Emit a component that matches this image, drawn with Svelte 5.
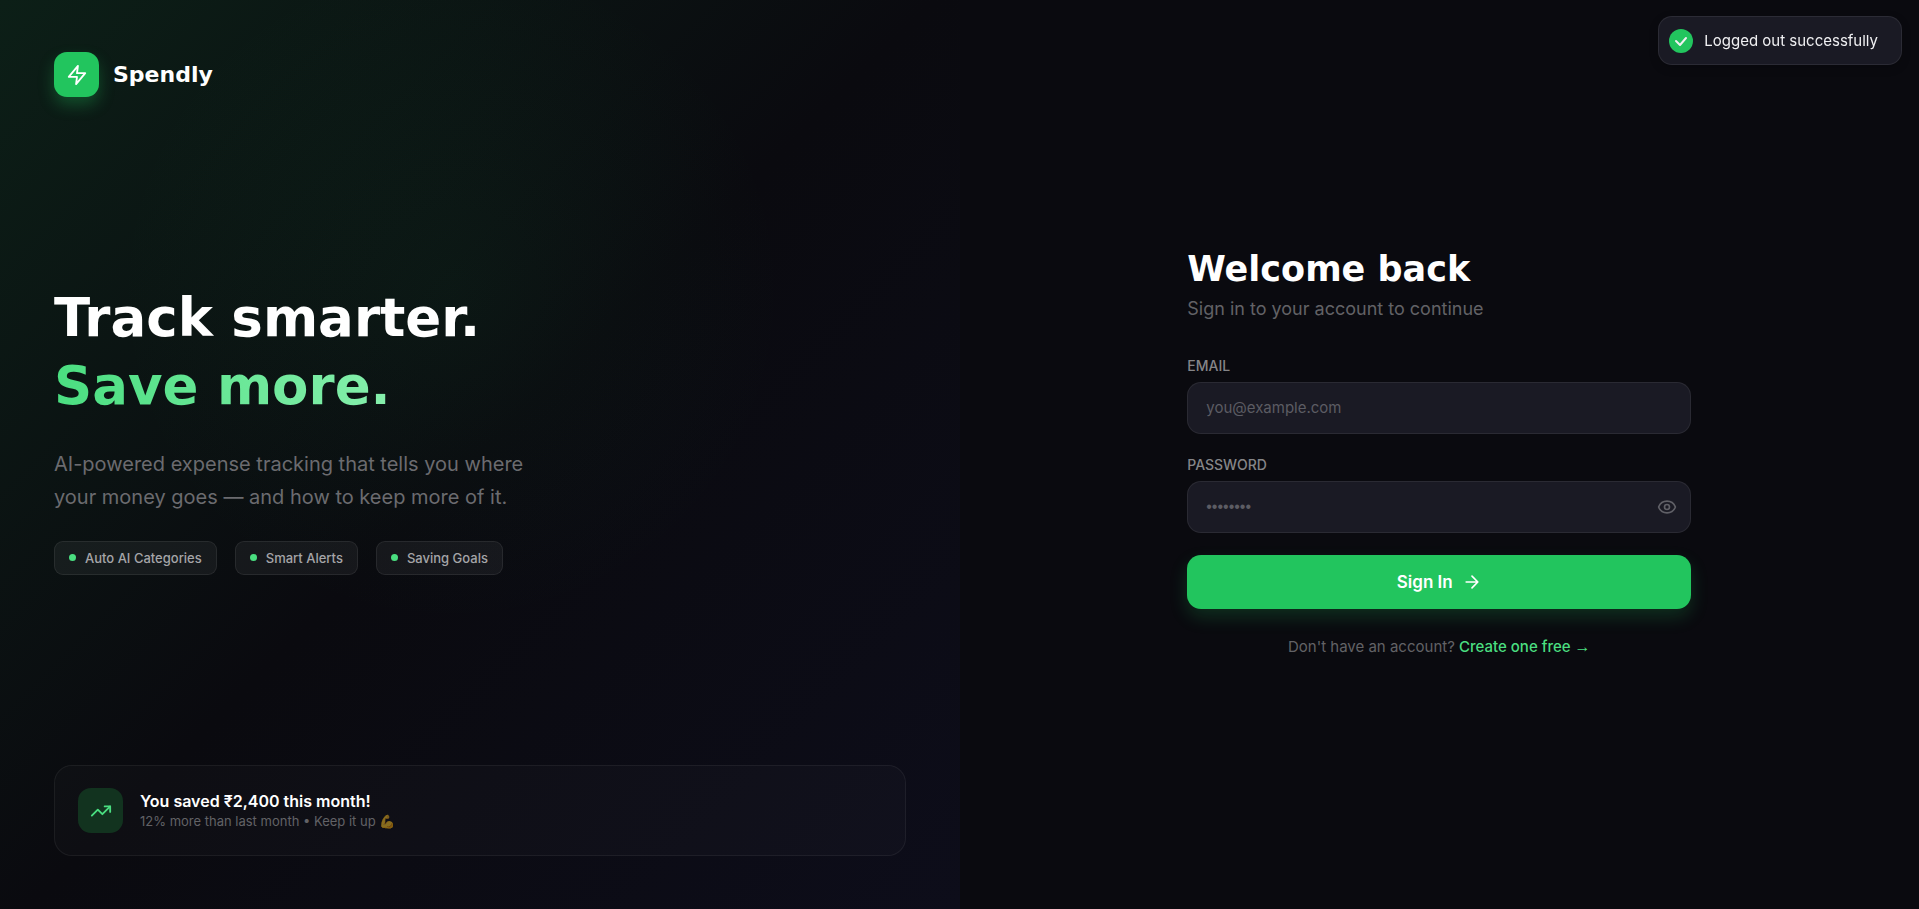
<script>
  const features = ["Auto AI Categories", "Smart Alerts", "Saving Goals"];

  let email = "";
  let password = "";
  let showPassword = false;

  function toggle() {
    showPassword = !showPassword;
  }
</script>

<div class="page">
  <section class="hero">
    <div class="glow"></div>

    <div class="brand">
      <span class="logo">
        <svg width="22" height="22" viewBox="0 0 24 24">
          <path d="M13 2 3 14h9l-1 8 10-12h-9l1-8z" />
        </svg>
      </span>
      <span class="name">Spendly</span>
    </div>

    <div class="pitch">
      <h1>Track smarter.<br /><span>Save more.</span></h1>
      <p>AI-powered expense tracking that tells you where<br />your money goes — and how to keep more of it.</p>
      <ul>
        {#each features as feature}
          <li>{feature}</li>
        {/each}
      </ul>
    </div>

    <div class="card">
      <span class="trend">
        <svg width="22" height="22" viewBox="0 0 24 24">
          <path d="m22 7-8.500 8.500-5-5L2 17" />
          <path d="M16 7h6v6" />
        </svg>
      </span>
      <div>
        <strong>You saved ₹2,400 this month!</strong>
        <small>12% more than last month • Keep it up <span class="emoji">💪</span></small>
      </div>
    </div>
  </section>

  <main>
    <form on:submit|preventDefault>
      <h2>Welcome back</h2>
      <p class="sub">Sign in to your account to continue</p>

      <label for="email">Email</label>
      <input id="email" type="email" placeholder="you@example.com" bind:value={email} />

      <label for="password">Password</label>
      <div class="field">
        {#if showPassword}
          <input id="password" type="text" placeholder="••••••••" bind:value={password} />
        {:else}
          <input id="password" type="password" placeholder="••••••••" bind:value={password} />
        {/if}
        <button class="eye" type="button" aria-label="Show password" on:click={toggle}>
          <svg width="20" height="20" viewBox="0 0 24 24">
            <path
              d="M2.062 12.348a1 1 0 0 1 0-.696 10.750 10.750 0 0 1 19.876 0 1 1 0 0 1 0 .696 10.750 10.750 0 0 1-19.876 0"
            />
            <circle cx="12" cy="12" r="3" />
          </svg>
        </button>
      </div>

      <button class="submit" type="submit">
        Sign In
        <svg width="20" height="20" viewBox="0 0 24 24">
          <path d="M5 12h14M12 5l7 7-7 7" />
        </svg>
      </button>

      <p class="signup">
        Don't have an account? <a href="#register">Create one free <span class="arrow">→</span></a>
      </p>
    </form>
  </main>

  <div class="toast" role="status">
    <span class="tick">
      <svg width="14" height="14" viewBox="0 0 14 14"><path d="M2 7l4 4 6-7" /></svg>
    </span>
    Logged out successfully
  </div>
</div>

<style>
  :global(body) {
    background: #0a0a0f;
  }

  .page {
    display: grid;
    grid-template-columns: 1fr 1fr;
    min-height: 100vh;
    color: #fff;
    font-family: Inter, "Liberation Sans", sans-serif;
    font-size: 14px;
  }

  h1,
  h2,
  p,
  ul {
    margin: 0;
    padding: 0;
  }

  svg {
    display: block;
    fill: none;
    stroke: currentColor;
    stroke-width: 2;
    stroke-linecap: round;
    stroke-linejoin: round;
  }

  .hero {
    position: relative;
    overflow: hidden;
    display: flex;
    flex-direction: column;
    justify-content: space-between;
    box-sizing: border-box;
    padding: 52px 54px 53px;
    background: linear-gradient(135deg, #0c1f17 0%, #0a0a0f 50%, #0d0d1a 100%);
  }

  .glow {
    position: absolute;
    top: -5%;
    left: 12%;
    width: 70%;
    height: 74%;
    background: radial-gradient(closest-side, rgba(34, 197, 94, 0.05), transparent);
  }

  .brand,
  .pitch,
  .card {
    position: relative;
  }

  .brand {
    display: flex;
    align-items: center;
    gap: 14px;
  }

  .logo,
  .trend {
    display: grid;
    place-items: center;
    width: 45px;
    height: 45px;
    border-radius: 13px;
  }

  .logo {
    background: #22c55e;
    box-shadow: 0 8px 16px rgba(34, 197, 94, 0.3);
  }

  .name,
  h1,
  h2 {
    font-family: "DejaVu Sans", sans-serif;
    font-weight: 700;
  }

  .name {
    font-size: 22px;
    line-height: 28px;
  }

  h1 {
    font-size: 53px;
    line-height: 68px;
  }

  h1 span {
    background: linear-gradient(90deg, #4ade80, #86efac);
    background-clip: text;
    color: transparent;
  }

  .pitch {
    padding-bottom: 4px;
  }

  .pitch p {
    margin: 28px 0 27px;
    color: #6b6b6f;
    font-size: 20px;
    line-height: 33px;
  }

  ul {
    display: flex;
    gap: 18px;
    list-style: none;
  }

  li {
    display: flex;
    align-items: center;
    gap: 9px;
    padding: 7px 14px;
    border: 1px solid rgba(255, 255, 255, 0.08);
    border-radius: 9px;
    background: rgba(255, 255, 255, 0.05);
    color: #a5a5a8;
    font-size: 13px;
    font-weight: 500;
    line-height: 18px;
  }

  li::before {
    content: "";
    width: 7px;
    height: 7px;
    border-radius: 50%;
    background: #4ade80;
  }

  .card {
    display: flex;
    align-items: center;
    gap: 17px;
    padding: 22px 23px;
    border: 1px solid rgba(255, 255, 255, 0.06);
    border-radius: 18px;
    background: rgba(255, 255, 255, 0.02);
  }

  .trend {
    background: #12331f;
    color: #4ade80;
  }

  strong,
  small {
    display: block;
    line-height: 20px;
  }

  strong {
    font-size: 16px;
    font-weight: 600;
  }

  small {
    color: #626266;
    font-size: 13px;
  }

  .emoji {
    opacity: 0.5;
  }

  main {
    display: flex;
    align-items: center;
    justify-content: center;
    padding: 36px;
  }

  form {
    width: 100%;
    max-width: 504px;
  }

  h2 {
    font-size: 35px;
    line-height: 36px;
  }

  .sub {
    margin: 8px 0 35px;
    color: #626266;
    font-size: 18px;
    line-height: 27px;
  }

  label {
    display: block;
    margin-bottom: 7px;
    color: #858588;
    font-size: 14px;
    font-weight: 500;
    line-height: 18px;
    text-transform: uppercase;
  }

  input {
    display: block;
    box-sizing: border-box;
    width: 100%;
    height: 52px;
    margin-bottom: 22px;
    padding: 0 18px;
    border: 1px solid rgba(255, 255, 255, 0.07);
    border-radius: 14px;
    background: #1a1a24;
    color: #fff;
    font: inherit;
    font-size: 15px;
  }

  input::placeholder {
    color: #5c5c63;
  }

  .field {
    position: relative;
  }

  .field input {
    font-family: "Liberation Sans", sans-serif;
    font-size: 16px;
  }

  .eye {
    position: absolute;
    top: 16px;
    right: 14px;
    padding: 0;
    border: 0;
    background: none;
    color: #606067;
    cursor: pointer;
  }

  .submit {
    display: flex;
    align-items: center;
    justify-content: center;
    gap: 9px;
    width: 100%;
    height: 54px;
    border: 0;
    border-radius: 14px;
    background: #22c55e;
    box-shadow: 0 8px 18px rgba(34, 197, 94, 0.2);
    color: #fff;
    font: inherit;
    font-size: 17px;
    font-weight: 600;
    cursor: pointer;
  }

  .signup {
    margin-top: 26px;
    color: #626266;
    font-size: 15px;
    line-height: 24px;
    text-align: center;
  }

  .signup a {
    color: #4ade80;
    font-weight: 500;
    text-decoration: none;
  }

  .arrow {
    font-family: "Liberation Sans", sans-serif;
    font-size: 16px;
  }

  .toast {
    position: fixed;
    top: 16px;
    right: 17px;
    display: flex;
    align-items: center;
    gap: 11px;
    box-sizing: border-box;
    height: 49px;
    padding: 0 23px 0 10px;
    border: 1px solid rgba(255, 255, 255, 0.08);
    border-radius: 14px;
    background: #1a1a24;
    box-shadow: 0 3px 10px rgba(0, 0, 0, 0.2);
    font-size: 15px;
    color: #f0f0f2;
  }

  .tick {
    display: grid;
    place-items: center;
    width: 24px;
    height: 24px;
    border-radius: 50%;
    background: #22c55e;
  }
</style>
